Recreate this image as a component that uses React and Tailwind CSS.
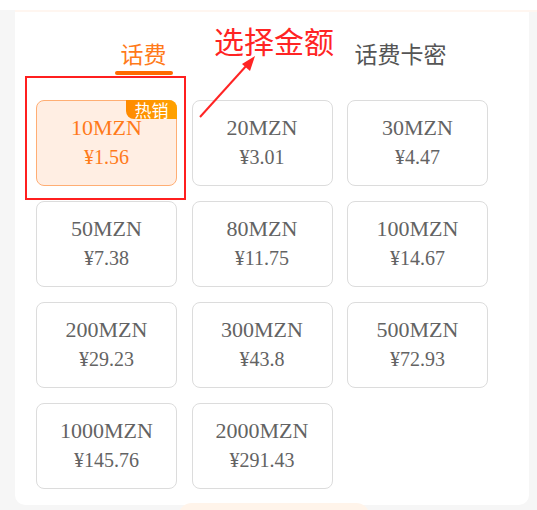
import { useState } from "react";

const items = [
    { name: "10MZN", price: "¥1.56", hot: true },
    { name: "20MZN", price: "¥3.01" },
    { name: "30MZN", price: "¥4.47" },
    { name: "50MZN", price: "¥7.38" },
    { name: "80MZN", price: "¥11.75" },
    { name: "100MZN", price: "¥14.67" },
    { name: "200MZN", price: "¥29.23" },
    { name: "300MZN", price: "¥43.8" },
    { name: "500MZN", price: "¥72.93" },
    { name: "1000MZN", price: "¥145.76" },
    { name: "2000MZN", price: "¥291.43" },
];

const cjk = "font-['Noto_Sans_CJK_SC','Noto_Sans',sans-serif]";
const serif = "font-['Liberation_Serif','Noto_Sans_CJK_SC',serif]";

const App = () => {
    const [tab, setTab] = useState(0);
    const [active, setActive] = useState(0);

    return (
        <div className="relative w-[537px] h-[510px] overflow-hidden bg-[#f6f6f6]">
            <div className="h-[10px] bg-white" />
            <div className="h-[2px] ml-[15px] bg-[#fff6f0]" />
            <div className="ml-[15px] mr-[8px] h-[493px] bg-white rounded-b-[10px]">
                <div className={`flex h-[88px] ${cjk}`}>
                    {["话费", "话费卡密"].map((t, i) => (
                        <button
                            key={t}
                            onClick={() => setTab(i)}
                            className="flex-1 flex flex-col items-center pt-[26px]"
                        >
                            <span className={`text-[23px] leading-[30px] ${tab === i ? "text-[#ff7a1a]" : "text-[#555]"}`}>{t}</span>
                            {tab === i && <span className="mt-[3px] w-[58px] h-[4px] rounded-full bg-[#ff6a00]" />}
                        </button>
                    ))}
                </div>
                <div className="grid grid-cols-[repeat(3,141px)] gap-x-[14.5px] gap-y-[15px] pl-[21px]">
                    {items.map((it, i) => (
                        <button
                            key={it.name}
                            onClick={() => setActive(i)}
                            className={`relative h-[86px] rounded-[8px] border flex flex-col items-center ${serif} ${
                                active === i ? "bg-[#ffeee3] border-[#ffae74] text-[#ff7a1a]" : "bg-white border-[#dcdcdc] text-[#636363]"
                            }`}
                        >
                            {it.hot && (
                                <span className={`absolute -top-px -right-px w-[51px] h-[19px] rounded-tr-[8px] rounded-bl-[8px] bg-gradient-to-r from-[#ff8a00] to-[#ffa200] text-white text-[17px] leading-[19px] text-center ${cjk}`}>
                                    热销
                                </span>
                            )}
                            <span className="mt-[14px] text-[22px] leading-[26px]">{it.name}</span>
                            <span className="mt-[4px] text-[20px] leading-[25px]">{it.price}</span>
                        </button>
                    ))}
                </div>
            </div>
            <div className="-mt-[2px] ml-[178px] w-[192px] h-[20px] rounded-t-[14px] bg-[#fff4ea]" />

            {/* annotation overlay */}
            <div className="absolute left-[25px] top-[76px] w-[161px] h-[124px] border-2 border-[#ff1f1f] pointer-events-none" />
            <div className={`absolute left-[214px] top-[22px] text-[30px] leading-[36px] text-[#ff2424] ${cjk}`}>选择金额</div>
            <svg className="absolute left-0 top-0 pointer-events-none" width="537" height="510">
                <line x1="200" y1="117" x2="247" y2="65" stroke="#ff2424" strokeWidth="2" />
                <polygon points="255,56 242,64 250,71" fill="#ff2424" />
            </svg>
        </div>
    );
};

export default App;
